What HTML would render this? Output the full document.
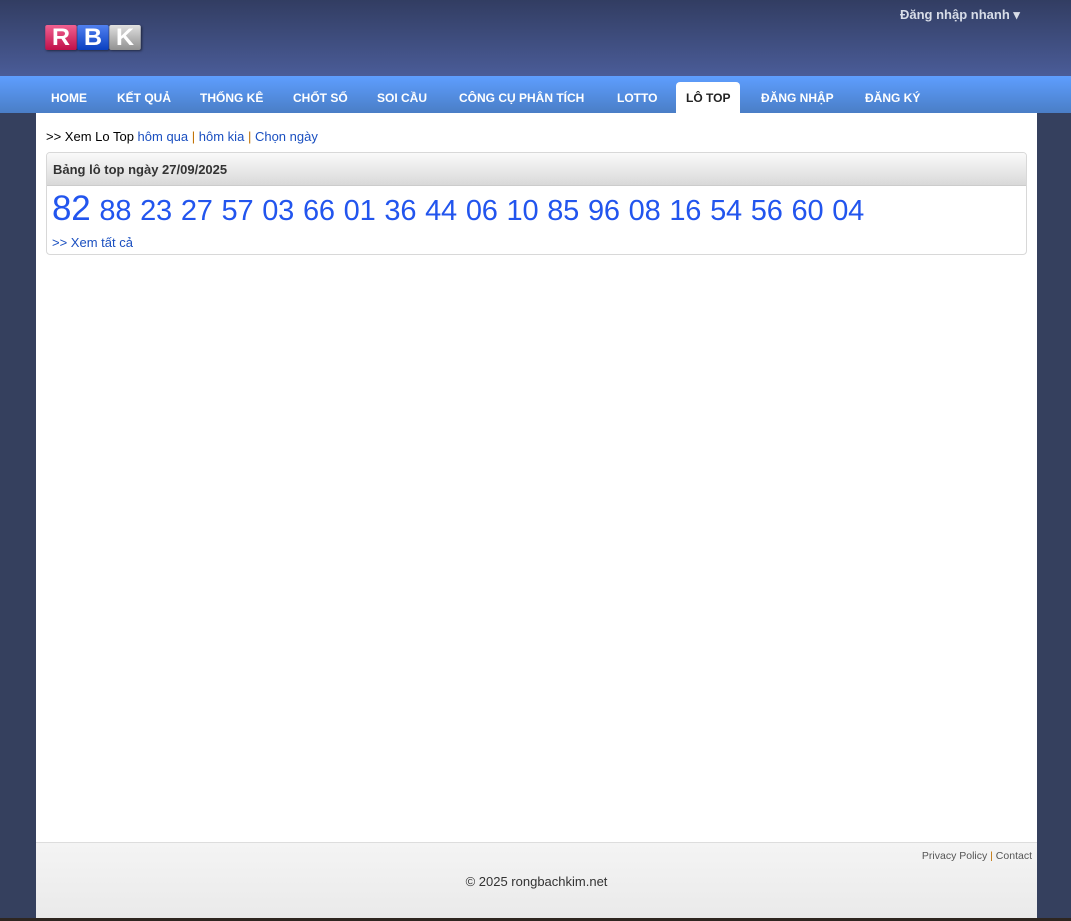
<!DOCTYPE html>
<html><head><meta charset="utf-8"><style>
*{margin:0;padding:0;box-sizing:border-box}
body{width:1071px;height:921px;background:#35405e;font-family:"Liberation Sans",Arial,sans-serif;position:relative;overflow:hidden}
.hdr{position:absolute;left:0;top:0;width:1071px;height:76px;background:linear-gradient(#323d62,#4a5c98)}
.logo{position:absolute;left:46px;top:24px;font:900 24px "Liberation Sans",sans-serif}
.logo span{display:inline-block;width:30px;height:25px;text-align:center;line-height:25px;color:#fff;border-radius:2px;margin-right:2px;box-shadow:1px 1px 2px rgba(0,0,0,.5);transform:scaleX(1.05)}
.quick{position:absolute;left:900px;top:7px;color:#d8dde8;font-weight:bold;font-size:13px}
.nav{position:absolute;left:0;top:76px;width:1071px;height:37px;background:linear-gradient(#5e9eff,#4a7ec6)}
.nav a{position:absolute;top:15px;color:#fff;font-weight:bold;font-size:12px;text-decoration:none}
.nav .act{top:6px;background:#fff;color:#222;height:31px;padding:9px 10px 0;border-radius:4px 4px 0 0}
.main{position:absolute;left:36px;top:113px;width:1001px;height:729px;background:#fff}
.sub{position:absolute;left:10px;top:16px;font-size:13px;color:#000}
.sub a{color:#1a4fc0;text-decoration:none}
.sub i{color:#c07000;font-style:normal}
.box{position:absolute;left:10px;top:39px;width:981px;height:103px;border:1px solid #d8d8d8;border-radius:4px;overflow:hidden}
.bh{height:33px;background:linear-gradient(#fafafa,#d9d9d9);font-weight:bold;font-size:13px;color:#333;padding:9px 0 0 6px;border-bottom:1px solid #ccc}
.nums{position:absolute;left:5px;top:36px;color:#2255ee;font-size:29px;white-space:nowrap;word-spacing:1px;letter-spacing:-0.2px}
.nums b{font-weight:normal;font-size:35px}
.all{position:absolute;left:5px;top:82px;font-size:13px;color:#1a4fc0}
.ftr{position:absolute;left:36px;top:842px;width:1001px;height:76px;background:linear-gradient(#f4f4f4,#eaeaea);border-top:1px solid #ddd}
.pl{position:absolute;right:5px;top:7px;font-size:10.5px;color:#555}
.pl i{color:#c07000;font-style:normal}
.cp{position:absolute;left:0;width:1001px;text-align:center;top:31px;font-size:13px;color:#333}
.bot{position:absolute;left:0;top:918px;width:1071px;height:3px;background:#2e2620}
</style></head><body>
<div class="hdr">
<div class="logo"><span style="background:linear-gradient(#f06090,#c0104a)">R</span><span style="background:linear-gradient(#5080f0,#0a40c0)">B</span><span style="background:linear-gradient(#e0e0e0,#909090)">K</span></div>
<div class="quick">Đăng nhập nhanh ▾</div>
</div>
<div class="nav">
<a style="left:51px">HOME</a><a style="left:117px">KẾT QUẢ</a><a style="left:200px">THỐNG KÊ</a><a style="left:293px">CHỐT SỐ</a><a style="left:377px">SOI CẦU</a><a style="left:459px">CÔNG CỤ PHÂN TÍCH</a><a style="left:617px">LOTTO</a><a class="act" style="left:676px">LÔ TOP</a><a style="left:761px">ĐĂNG NHẬP</a><a style="left:865px">ĐĂNG KÝ</a>
</div>
<div class="main">
<div class="sub">&gt;&gt; Xem Lo Top <a>hôm qua</a> <i>|</i> <a>hôm kia</a> <i>|</i> <a>Chọn ngày</a></div>
<div class="box"><div class="bh">Bảng lô top ngày 27/09/2025</div>
<div class="nums"><b>82</b> 88 23 27 57 03 66 01 36 44 06 10 85 96 08 16 54 56 60 04</div>
<div class="all">&gt;&gt; Xem tất cả</div></div>
</div>
<div class="ftr"><div class="pl">Privacy Policy <i>|</i> Contact</div><div class="cp">© 2025 rongbachkim.net</div></div>
<div class="bot"></div>
</body></html>
